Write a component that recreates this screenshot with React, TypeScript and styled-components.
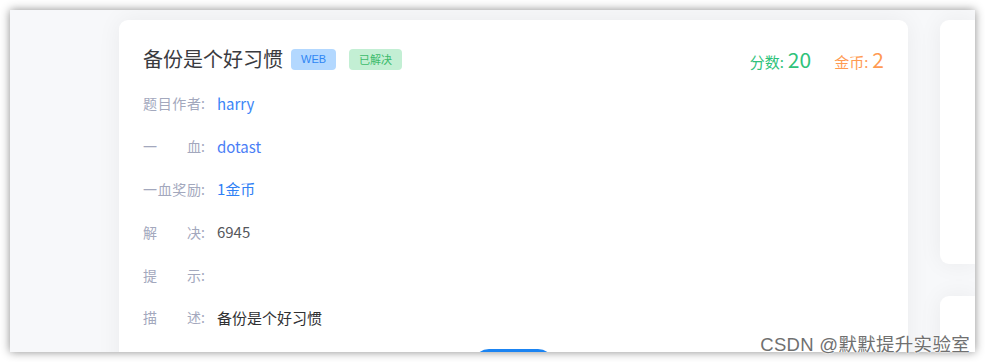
import React from "react";
import styled, { createGlobalStyle } from "styled-components";

const Global = createGlobalStyle`
  html, body { margin: 0; padding: 0; background: #ffffff; }
  body { font-family: "Noto Sans CJK SC", sans-serif; }
  * { box-sizing: border-box; }
`;

const Page = styled.div`
  width: 985px;
  height: 362px;
  padding: 10px;
  position: relative;
`;

const Frame = styled.div`
  width: 965px;
  height: 342px;
  background: #f7f8fa;
  box-shadow: 0 0 9px rgba(0, 0, 0, 0.45);
  overflow: hidden;
  display: flex;
  gap: 32px;
  padding: 10px 0 0 109px;
`;

const MainCard = styled.div`
  width: 789px;
  flex: none;
  background: #ffffff;
  border-radius: 9px;
  box-shadow: 0 0 24px rgba(0, 0, 0, 0.06);
  padding: 24px 24px 0 24px;
  height: 380px;
`;

const SideColumn = styled.div`
  flex: 1;
  display: flex;
  flex-direction: column;
  gap: 32px;
`;

const SideCard = styled.div<{ $h: number }>`
  height: ${(p) => p.$h}px;
  background: #ffffff;
  border-radius: 9px 0 0 9px;
  box-shadow: 0 0 24px rgba(0, 0, 0, 0.06);
  flex: none;
`;

const Header = styled.div`
  display: flex;
  align-items: center;
  height: 30px;
  margin-bottom: 8px;
`;

const Title = styled.h2`
  margin: 0;
  font-family: "Noto Sans CJK SC", sans-serif;
  font-weight: 400;
  font-size: 20px;
  color: #3a3b3f;
  line-height: 30px;
`;

const Tag = styled.span<{ $bg: string; $fg: string; $gap: number }>`
  display: inline-flex;
  align-items: center;
  height: 21px;
  padding: 0 10px;
  border-radius: 4px;
  background: ${(p) => p.$bg};
  color: ${(p) => p.$fg};
  font-size: 11px;
  font-family: "Liberation Sans", "Noto Sans CJK SC", sans-serif;
  margin-left: ${(p) => p.$gap}px;
`;

const Spacer = styled.div`
  flex: 1;
`;

const Stat = styled.div<{ $color: string }>`
  display: flex;
  align-items: baseline;
  color: ${(p) => p.$color};
  margin-left: 23px;
  font-family: "Noto Sans CJK SC", sans-serif;
`;

const StatLabel = styled.span`
  font-size: 15px;
  margin-right: 4px;
`;

const StatValue = styled.span`
  font-size: 21px;
`;

const Row = styled.div`
  display: flex;
  align-items: center;
  height: 42.8px;
`;

const Label = styled.span`
  display: flex;
  flex: none;
  font-family: "Noto Sans CJK SC", sans-serif;
  font-size: 14px;
  color: #a3a8bd;
  margin-right: 12px;
`;

const LabelText = styled.span`
  width: 58px;
  text-align: justify;
  text-align-last: justify;
`;

const Value = styled.span<{ $color: string }>`
  font-size: 15px;
  color: ${(p) => p.$color};
  font-family: "Noto Sans CJK SC", sans-serif;
`;

const ButtonWrap = styled.div`
  display: flex;
  justify-content: center;
  margin-top: 10px;
`;

const SubmitButton = styled.button`
  width: 81px;
  height: 32px;
  border: none;
  border-radius: 16px;
  background: #1b84f2;
  color: #fff;
`;

const Watermark = styled.div`
  position: absolute;
  right: 15px;
  bottom: 6px;
  font-family: "Liberation Sans", "Noto Sans CJK SC", sans-serif;
  font-size: 18.5px;
  color: #707070;
  text-shadow: 0 0 2px #fff, 0 0 2px #fff, 0 0 1px #fff;
  letter-spacing: 0.3px;
`;

const rows: { label: string; value: string; color: string }[] = [
  { label: "题目作者", value: "harry", color: "#3b86f7" },
  { label: "一血", value: "dotast", color: "#4a7ef6" },
  { label: "一血奖励", value: "1金币", color: "#2f80f5" },
  { label: "解决", value: "6945", color: "#55575c" },
  { label: "提示", value: "", color: "#55575c" },
  { label: "描述", value: "备份是个好习惯", color: "#303133" },
];

export default function App() {
  return (
    <>
      <Global />
      <Page>
        <Frame>
          <MainCard>
            <Header>
              <Title>备份是个好习惯</Title>
              <Tag $bg="#b3d8ff" $fg="#2f86f4" $gap={8}>WEB</Tag>
              <Tag $bg="#c3efd4" $fg="#3dbb6c" $gap={13}>已解决</Tag>
              <Spacer />
              <Stat $color="#2ec27a">
                <StatLabel>分数:</StatLabel>
                <StatValue>20</StatValue>
              </Stat>
              <Stat $color="#ff9a52">
                <StatLabel>金币:</StatLabel>
                <StatValue>2</StatValue>
              </Stat>
            </Header>
            {rows.map((r) => (
              <Row key={r.label}>
                <Label>
                  <LabelText>{r.label}</LabelText>:
                </Label>
                <Value $color={r.color}>{r.value}</Value>
              </Row>
            ))}
            <ButtonWrap>
              <SubmitButton />
            </ButtonWrap>
          </MainCard>
          <SideColumn>
            <SideCard $h={244} />
            <SideCard $h={200} />
          </SideColumn>
        </Frame>
        <Watermark>CSDN @默默提升实验室</Watermark>
      </Page>
    </>
  );
}
